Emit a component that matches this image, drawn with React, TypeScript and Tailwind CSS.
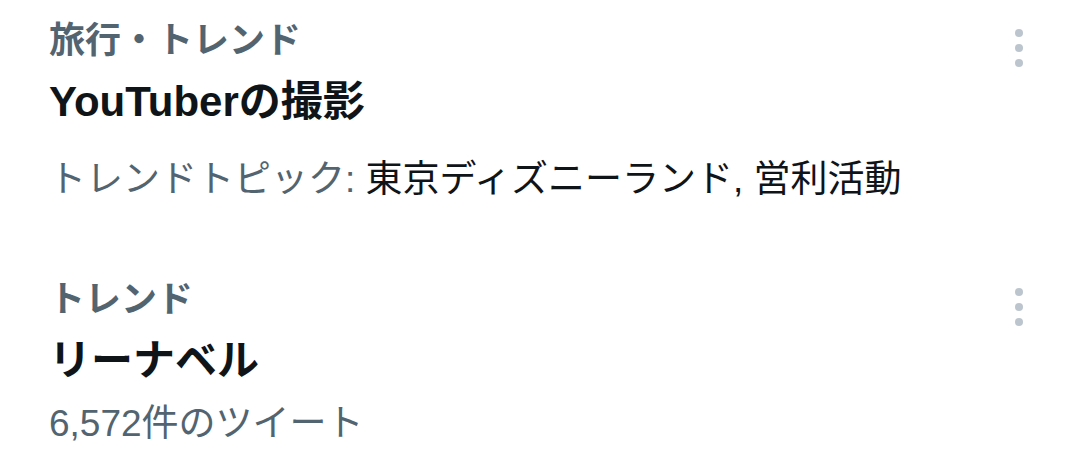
const trends = [
  {
    category: "旅行・トレンド",
    title: "YouTuberの撮影",
    topics: "東京ディズニーランド, 営利活動",
  },
  {
    category: "トレンド",
    title: "リーナベル",
    count: "6,572件のツイート",
  },
];

const MoreDots = () => (
  <div className="flex flex-col gap-[7px] pt-[10px]">
    <span className="block w-[8px] h-[8px] rounded-full bg-[#bcc5cd]" />
    <span className="block w-[8px] h-[8px] rounded-full bg-[#bcc5cd]" />
    <span className="block w-[8px] h-[8px] rounded-full bg-[#bcc5cd]" />
  </div>
);

const App = () => {
  return (
    <div
      className="w-[1080px] h-[469px] bg-white overflow-hidden"
      style={{ fontFamily: '"Liberation Sans", "Noto Sans CJK JP", sans-serif' }}
    >
      <div className="flex pl-[49px] pr-[57px] pt-[19px]">
        <div className="flex-1">
          <div className="text-[36px] leading-[44px] font-bold text-[#536471]">{trends[0].category}</div>
          <div className="mt-[15px] text-[42px] leading-[48px] font-bold text-[#0f1419]">{trends[0].title}</div>
          <div className="mt-[32px] text-[37px] leading-[44px] text-[#0f1419]">
            <span className="text-[#536471]">トレンドトピック: </span>
            {trends[0].topics}
          </div>
        </div>
        <MoreDots />
      </div>
      <div className="flex pl-[49px] pr-[57px] pt-[76px]">
        <div className="flex-1">
          <div className="text-[36px] leading-[44px] font-bold text-[#536471]">{trends[1].category}</div>
          <div className="mt-[15px] text-[42px] leading-[48px] font-bold text-[#0f1419]">{trends[1].title}</div>
          <div className="mt-[17px] text-[37px] leading-[44px] text-[#536471]">{trends[1].count}</div>
        </div>
        <MoreDots />
      </div>
    </div>
  );
};

export default App;
